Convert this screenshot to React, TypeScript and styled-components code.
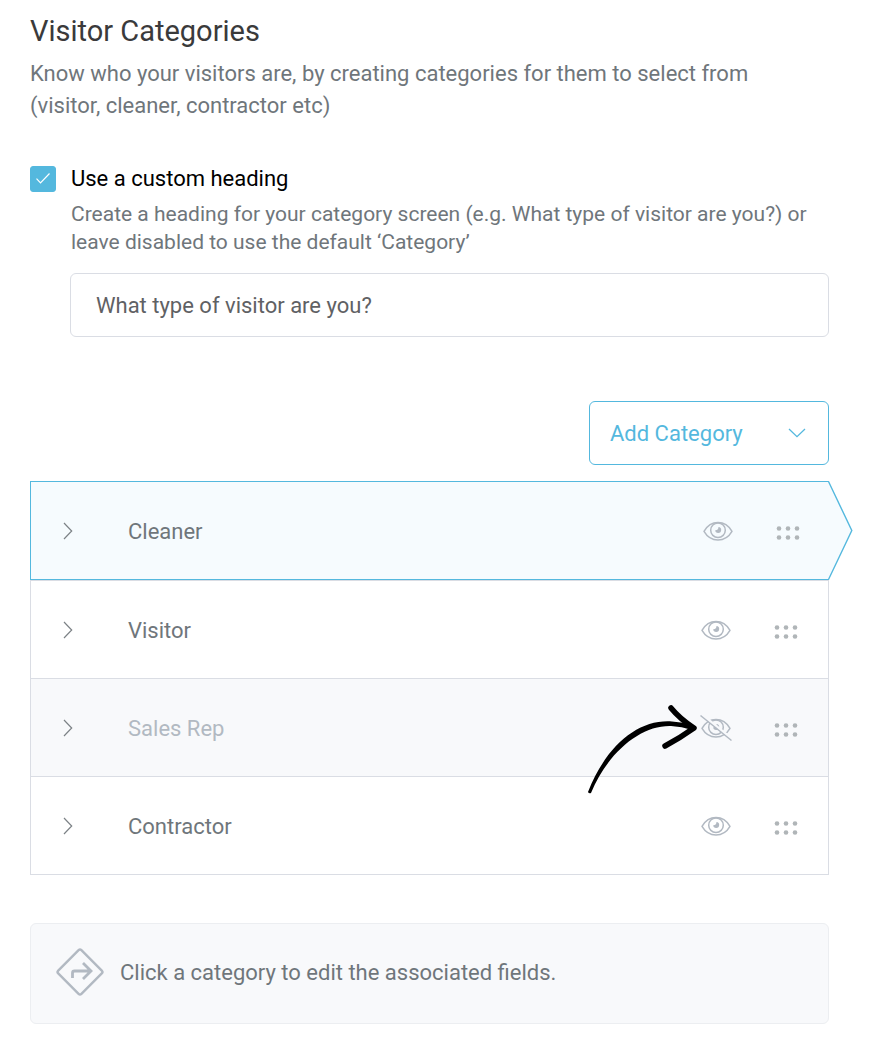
import React, { useState } from "react";
import styled, { createGlobalStyle, css } from "styled-components";

const color = {
  blue: "#54b8de",
  blueTint: "#f6fbfe",
  grey: "#6f767b",
  icon: "#b2b9c2",
  dots: "#b0b5b8",
  line: "#dadde4",
  panel: "#f8f9fb",
};

const GlobalStyle = createGlobalStyle`
  *, *::before, *::after { box-sizing: border-box; }
  body {
    margin: 0;
    background: #fff;
    color: ${color.grey};
    font-family: Roboto, "Liberation Sans", sans-serif;
    font-size: 22px;
  }
  button, input { font: inherit; }
  h1, p, ul { margin: 0; padding: 0; }
`;

const Page = styled.main`
  display: flex;
  flex-direction: column;
  padding: 14px 41px 20px 30px;
`;

const Title = styled.h1`
  color: #3a3a3b;
  font-size: 29px;
  font-weight: 400;
  line-height: 34px;
`;

const Intro = styled.p`
  max-width: 760px;
  margin-top: 10px;
  line-height: 32px;
`;

const HeadingOption = styled.section`
  display: grid;
  grid-template-columns: 26px 1fr;
  column-gap: 14px;
  align-items: center;
  margin-top: 40px;
`;

const CheckWrap = styled.span`
  display: grid;
  height: 26px;

  & > * { grid-area: 1 / 1; }
  & > svg { place-self: center; pointer-events: none; }
`;

const Checkbox = styled.input`
  appearance: none;
  width: 26px;
  height: 26px;
  margin: 0;
  border: 1px solid ${color.blue};
  border-radius: 3px;
  background: #fff;

  &:checked { background: ${color.blue}; }
`;

const OptionLabel = styled.label`
  padding-left: 1px;
  color: #000;
  line-height: 34px;
`;

const OptionHelp = styled.p`
  grid-column: 2;
  margin-top: 4px;
  padding-left: 1px;
  font-size: 21px;
  line-height: 28px;
`;

const HeadingInput = styled.input`
  grid-column: 2;
  width: 100%;
  height: 64px;
  margin-top: 17px;
  padding: 0 25px;
  border: 1px solid ${color.line};
  border-radius: 6px;
  background: #fff;
  color: #5f6164;
`;

const AddButton = styled.button`
  display: flex;
  align-items: center;
  justify-content: space-between;
  align-self: flex-end;
  width: 240px;
  height: 64px;
  margin-top: 64px;
  padding: 0 22px 0 20px;
  border: 1px solid ${color.blue};
  border-radius: 6px;
  background: #fff;
  color: ${color.blue};
`;

const CategoryList = styled.ul`
  margin-top: 16px;
  list-style: none;
`;

type RowState = "active" | "normal" | "hidden";

const Row = styled.li<{ $state: RowState }>`
  position: relative;
  display: flex;
  align-items: center;
  height: 98px;
  padding: 0 25px 0 20px;
  border: 1px solid ${color.line};
  border-top: 0;

  ${({ $state }) =>
    $state === "active" &&
    css`
      height: 99px;
      margin-bottom: 1px;
      padding-right: 24px;
      border: 1px solid ${color.blue};
      border-right: 0;
      background: ${color.blueTint};
      box-shadow: 0 1px 0 ${color.line};
    `}

  ${({ $state }) =>
    $state === "hidden" &&
    css`
      background: ${color.panel};
      color: ${color.icon};
    `}
`;

const IconButton = styled.button`
  display: flex;
  align-items: center;
  justify-content: center;
  width: 34px;
  height: 40px;
  padding: 0;
  border: 0;
  background: none;
`;

const RowName = styled.span`
  flex: 1;
  margin-left: 43px;
  padding-top: 2px;
`;

const RowActions = styled.div`
  display: flex;
  gap: 36px;
`;

const PointerTip = styled.svg`
  position: absolute;
  top: -1px;
  left: calc(100% - 1px);
`;

const DrawnArrow = styled.svg`
  position: absolute;
  top: 24px;
  right: 128px;
  pointer-events: none;
`;

const Hint = styled.aside`
  display: flex;
  align-items: center;
  gap: 15px;
  min-height: 101px;
  margin-top: 48px;
  padding: 0 24px 2px;
  border: 1px solid #eceef1;
  border-radius: 6px;
  background: ${color.panel};
`;

const CheckIcon = () => (
  <svg width="26" height="26" viewBox="0 0 26 26" fill="none" stroke="#fff" strokeWidth="1.2">
    <path d="M6.5 12.7 10.5 16.8 19.5 7.5" />
  </svg>
);

const ChevronDown = () => (
  <svg width="18" height="10" viewBox="0 0 18 10" fill="none" stroke={color.blue} strokeWidth="1.3">
    <path d="M1 1 9 8.6 17 1" />
  </svg>
);

const ChevronRight = () => (
  <svg width="10" height="18" viewBox="0 0 10 18" fill="none" stroke="#7c8286" strokeWidth="1.2">
    <path d="M1 1 8.7 9 1 17" />
  </svg>
);

const EyeShape = () => (
  <>
    <g fill="none" stroke={color.icon} strokeWidth="1.5">
      <path d="M3 16.4C6.5 10.4 11.5 7.6 17 7.6S27.5 10.4 31 16.4C27.5 22.4 22.5 25 17 25S6.5 22.4 3 16.4Z" strokeLinejoin="round" />
      <circle cx="17" cy="15.2" r="7.3" />
    </g>
    <path d="M17.5 12A3 3 0 1 1 14.2 15.2Q17.2 15.4 17.5 12Z" fill={color.icon} />
  </>
);

const EyeIcon = () => (
  <svg width="34" height="32" viewBox="0 0 34 32">
    <EyeShape />
  </svg>
);

const EyeOffIcon = () => (
  <svg width="34" height="32" viewBox="0 0 34 32">
    <EyeShape />
    <path d="M2.5 2.2 33.5 27.2" stroke={color.panel} strokeWidth="2.6" />
    <path d="M1.5 3.5 32.5 28.5" stroke={color.icon} strokeWidth="1.5" />
  </svg>
);

const DragIcon = () => (
  <svg width="24" height="18" viewBox="0 -4 24 18" fill={color.dots}>
    {[3, 12, 21].map((x) => (
      <React.Fragment key={x}>
        <circle cx={x} cy="2.5" r="2.3" />
        <circle cx={x} cy="11.5" r="2.3" />
      </React.Fragment>
    ))}
  </svg>
);

const DirectionsIcon = () => (
  <svg width="50" height="50" viewBox="0 1 50 50" fill="none" stroke={color.icon}>
    <rect x="8.6" y="8.6" width="32.8" height="32.8" rx="2" strokeWidth="2.4" transform="rotate(45 25 25)" />
    <path d="M17.5 31V26Q17.5 24 19.5 24H36M28 16 36 24 28 32" strokeWidth="2.8" />
  </svg>
);

const AnnotationArrow = () => (
  <DrawnArrow width="114" height="94" viewBox="0 0 114 94" aria-hidden="true">
    <path d="M2 89C20 43 52 16 86 18.5Q97 19 107 22L106 27Q96 23.5 85 23C55 22 22 49 5 90Q3 91 2 89Z" />
    <path d="M85 5Q94 16 108 25Q94 35 79 43" fill="none" stroke="#000" strokeWidth="5.5" strokeLinecap="round" strokeLinejoin="round" />
  </DrawnArrow>
);

const categories: { name: string; state: RowState }[] = [
  { name: "Cleaner", state: "active" },
  { name: "Visitor", state: "normal" },
  { name: "Sales Rep", state: "hidden" },
  { name: "Contractor", state: "normal" },
];

const CategoryRow = ({ name, state }: { name: string; state: RowState }) => (
  <Row $state={state}>
    <IconButton type="button" aria-label={`Expand ${name}`}>
      <ChevronRight />
    </IconButton>
    <RowName>{name}</RowName>
    <RowActions>
      <IconButton type="button" aria-label={`Toggle visibility of ${name}`}>
        {state === "hidden" ? <EyeOffIcon /> : <EyeIcon />}
      </IconButton>
      <IconButton type="button" aria-label={`Reorder ${name}`}>
        <DragIcon />
      </IconButton>
    </RowActions>
    {state === "active" && (
      <PointerTip width="26" height="99" viewBox="0 0 26 99" aria-hidden="true">
        <path d="M0.5 0.5 23.8 49.5 0.5 98.5" fill={color.blueTint} stroke={color.blue} strokeWidth="1.4" />
      </PointerTip>
    )}
    {state === "hidden" && <AnnotationArrow />}
  </Row>
);

export default function App() {
  const [custom, setCustom] = useState(true);
  const [heading, setHeading] = useState("What type of visitor are you?");

  return (
    <>
      <GlobalStyle />
      <Page>
        <Title>Visitor Categories</Title>
        <Intro>
          Know who your visitors are, by creating categories for them to select from
          (visitor, cleaner, contractor etc)
        </Intro>

        <HeadingOption>
          <CheckWrap>
            <Checkbox
              id="custom-heading"
              type="checkbox"
              checked={custom}
              onChange={(e) => setCustom(e.target.checked)}
            />
            {custom && <CheckIcon />}
          </CheckWrap>
          <OptionLabel htmlFor="custom-heading">Use a custom heading</OptionLabel>
          <OptionHelp>
            Create a heading for your category screen (e.g. What type of visitor are you?) or
            leave disabled to use the default ‘Category’
          </OptionHelp>
          <HeadingInput
            type="text"
            aria-label="Custom heading"
            value={heading}
            onChange={(e) => setHeading(e.target.value)}
          />
        </HeadingOption>

        <AddButton type="button">
          Add Category
          <ChevronDown />
        </AddButton>

        <CategoryList>
          {categories.map((c) => (
            <CategoryRow key={c.name} {...c} />
          ))}
        </CategoryList>

        <Hint>
          <DirectionsIcon />
          <p>Click a category to edit the associated fields.</p>
        </Hint>
      </Page>
    </>
  );
}
